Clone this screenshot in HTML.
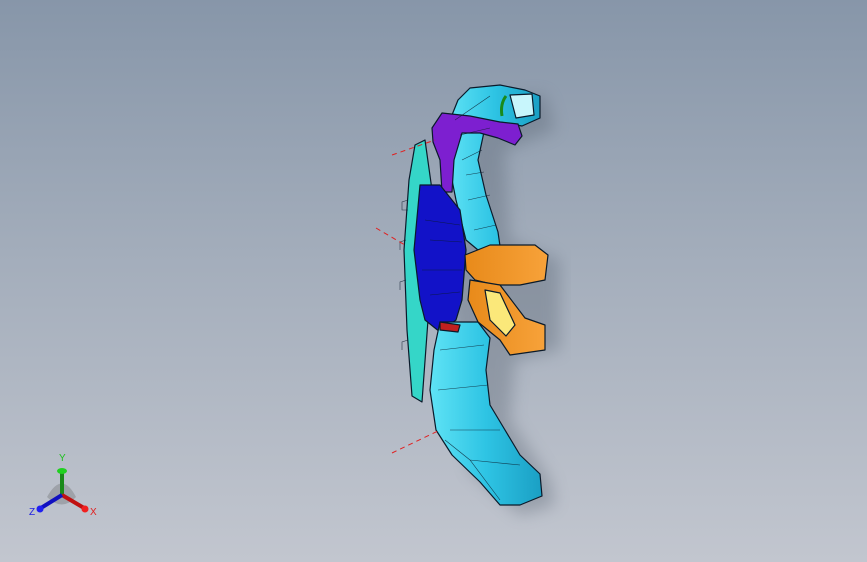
<!DOCTYPE html>
<html><head><meta charset="utf-8"><style>
html,body{margin:0;padding:0}
body{width:867px;height:562px;overflow:hidden;background:linear-gradient(180deg,#8796a9 0%,#a3adbb 45%,#c2c6cf 100%);font-family:"Liberation Sans",sans-serif}
svg{position:absolute;left:0;top:0}
</style></head><body>
<svg width="867" height="562" viewBox="0 0 867 562">
<defs>
<filter id="b"><feGaussianBlur stdDeviation="8"/></filter>
<linearGradient id="cy" x1="0" x2="1"><stop offset="0" stop-color="#5fe3f5"/><stop offset="0.5" stop-color="#2ec4e4"/><stop offset="1" stop-color="#1a9fc4"/></linearGradient>
<linearGradient id="or" x1="0" x2="1"><stop offset="0" stop-color="#e88a1a"/><stop offset="1" stop-color="#f7a23a"/></linearGradient>
</defs>
<g opacity="0.35" filter="url(#b)" fill="#55606e">
<polygon points="470,100 545,95 555,130 505,150 510,240 560,260 560,350 515,360 510,420 550,480 555,505 520,515 470,470 450,300"/>
</g>
<g stroke="#0a1a2a" stroke-width="1.2" stroke-linejoin="round">
<polygon fill="url(#cy)" points="458,100 470,88 500,85 525,90 540,96 540,118 522,126 500,122 484,132 478,160 486,195 498,232 500,246 478,250 466,240 456,200 448,160 450,120"/>
<polygon fill="#7d1fd0" points="432,128 442,113 470,116 500,122 518,124 522,136 515,145 498,138 480,133 462,133 454,160 452,192 442,192 440,160 433,142"/>
<polygon fill="#35d6c8" points="415,145 425,140 432,190 428,320 422,402 412,396 407,330 404,250 409,180"/>
<polygon fill="#1212c8" points="420,185 440,185 460,210 466,250 462,300 456,320 440,332 425,320 420,300 414,250"/>
<polygon fill="url(#cy)" points="440,322 478,322 490,338 486,370 490,405 505,430 520,455 540,474 542,496 520,505 500,505 480,482 452,455 436,430 430,390 434,350"/>
<polygon fill="url(#or)" points="465,255 490,245 535,245 548,255 545,280 520,285 495,285 475,280 466,270"/>
<polygon fill="url(#or)" points="470,280 500,285 525,318 545,325 545,350 510,355 500,340 478,322 468,300"/>
<polygon fill="#fbe87a" points="485,290 500,293 515,325 506,336 490,320"/>
<polygon fill="#c8f6fc" points="510,95 532,94 534,115 516,118"/>
<path d="M506 96 Q500 104 502 116" fill="none" stroke="#1a8a1a" stroke-width="3"/>
<polygon fill="#c02020" points="440,322 460,325 458,332 440,330"/>
</g>
<g stroke="#0a1a2a" stroke-width="0.6" fill="none" opacity="0.8">
<path d="M455 120 L490 96 M460 135 L490 128 M462 160 L482 150 M468 200 L490 195 M474 230 L496 225 M466 175 L484 172 M440 350 L484 345 M438 390 L488 385 M450 430 L500 430 M470 460 L520 465 M425 220 L460 225 M422 270 L462 270 M430 240 L462 242 M430 295 L460 292 M445 440 L470 460 L500 500"/>
<path d="M408 200 L402 202 L402 210 L408 210 M406 240 L400 242 L400 250 M406 280 L400 282 L400 290 M408 340 L402 342 L402 350"/>
</g>
<g stroke="#e02020" stroke-width="1" stroke-dasharray="5,4">
<line x1="392" y1="155" x2="435" y2="140"/>
<line x1="376" y1="228" x2="405" y2="245"/>
<line x1="392" y1="453" x2="440" y2="430"/>
</g>
<path d="M47 497 Q62 470 76 497 Q62 512 47 497Z" fill="#8a8d92" opacity="0.6"/>
<line x1="62" y1="495" x2="62" y2="472" stroke="#1a8a1a" stroke-width="4"/>
<ellipse cx="62" cy="471" rx="5" ry="3" fill="#20d020"/>
<line x1="62" y1="495" x2="84" y2="508" stroke="#c01010" stroke-width="4"/>
<circle cx="85" cy="509" r="3.5" fill="#f02020"/>
<line x1="62" y1="495" x2="41" y2="508" stroke="#1010c0" stroke-width="4"/>
<circle cx="40" cy="509" r="3.5" fill="#2020f0"/>
<text x="59" y="461" font-size="10" fill="#20c020">Y</text>
<text x="90" y="515" font-size="10" fill="#e02020">X</text>
<text x="29" y="515" font-size="10" fill="#2020e0">Z</text>
</svg>
</body></html>
